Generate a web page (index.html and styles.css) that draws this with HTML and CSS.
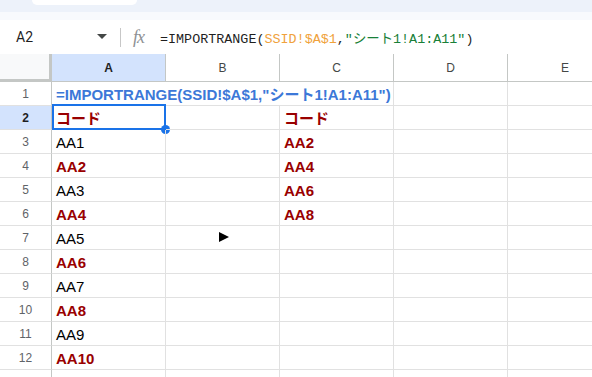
FILE: index.html
```html
<!DOCTYPE html>
<html lang="ja">
<head>
<meta charset="utf-8">
<title>Sheet</title>
<link rel="stylesheet" href="styles.css">
</head>
<body>
<div class="top"><div class="pill"></div></div>
<div class="band"></div>
<div class="fbar">
  <div class="namebox">A2</div>
  <svg class="caret" width="10" height="6" viewBox="0 0 10 6"><path d="M0 0h10L5 5z" fill="#444746"/></svg>
  <div class="sep"></div>
  <div class="fx">fx</div>
  <div class="formula">=IMPORTRANGE(<span class="ref">SSID!$A$1</span>,<span class="str">"シート1!A1:A11"</span>)</div>
</div>
<div class="sheet">
  <div class="corner"></div>
  <div class="ch sel">A</div>
  <div class="ch">B</div>
  <div class="ch">C</div>
  <div class="ch">D</div>
  <div class="ch edge"><span class="lbl">E</span></div>

  <div class="rh">1</div>
  <div class="c span3 blue">=IMPORTRANGE(SSID!$A$1,"シート1!A1:A11")</div>
  <div class="c"></div><div class="c"></div>

  <div class="rh sel">2</div>
  <div class="c red active">コード<span class="frame"></span><span class="handle"></span></div>
  <div class="c"></div><div class="c red">コード</div><div class="c"></div><div class="c"></div>

  <div class="rh">3</div>
  <div class="c">AA1</div><div class="c"></div><div class="c red">AA2</div><div class="c"></div><div class="c"></div>

  <div class="rh">4</div>
  <div class="c red">AA2</div><div class="c"></div><div class="c red">AA4</div><div class="c"></div><div class="c"></div>

  <div class="rh">5</div>
  <div class="c">AA3</div><div class="c"></div><div class="c red">AA6</div><div class="c"></div><div class="c"></div>

  <div class="rh">6</div>
  <div class="c red">AA4</div><div class="c"></div><div class="c red">AA8</div><div class="c"></div><div class="c"></div>

  <div class="rh">7</div>
  <div class="c">AA5</div><div class="c"></div><div class="c"></div><div class="c"></div><div class="c"></div>

  <div class="rh">8</div>
  <div class="c red">AA6</div><div class="c"></div><div class="c"></div><div class="c"></div><div class="c"></div>

  <div class="rh">9</div>
  <div class="c">AA7</div><div class="c"></div><div class="c"></div><div class="c"></div><div class="c"></div>

  <div class="rh">10</div>
  <div class="c red">AA8</div><div class="c"></div><div class="c"></div><div class="c"></div><div class="c"></div>

  <div class="rh">11</div>
  <div class="c">AA9</div><div class="c"></div><div class="c"></div><div class="c"></div><div class="c"></div>

  <div class="rh">12</div>
  <div class="c red">AA10</div><div class="c"></div><div class="c"></div><div class="c"></div><div class="c"></div>

  <div class="rh last"></div>
  <div class="c last"></div><div class="c last"></div><div class="c last"></div><div class="c last"></div><div class="c last"></div>

  <svg class="cursor" width="12" height="12" viewBox="0 0 12 12"><path d="M1 1L11 6L1 11z" fill="#000"/></svg>
</div>
</body>
</html>
```
FILE: styles.css
```css
html, body {
  margin: 0;
  padding: 0;
  background: #fff;
  overflow: hidden;
  width: 592px;
  height: 377px;
}
body {
  font-family: "Liberation Sans", Arial, "Noto Sans CJK JP", sans-serif;
}
.top {
  height: 12px;
  background: #edf2fa;
  display: flex;
}
.pill {
  margin-left: 32px;
  width: 105px;
  height: 5px;
  background: #fff;
  border-radius: 0 0 6px 6px;
}
.band {
  height: 8px;
  background: #f8fafd;
}
.fbar {
  height: 34px;
  display: flex;
  align-items: center;
  background: #fff;
}
.namebox {
  font-family: Roboto, "Liberation Sans", sans-serif;
  font-size: 14px;
  color: #1f1f1f;
  margin-left: 16px;
  width: 80px;
}
.caret {
  margin-left: 1px;
}
.sep {
  width: 1px;
  height: 19px;
  background: #c7c7c7;
  margin-left: 13px;
}
.fx {
  font-family: "Liberation Serif", serif;
  font-style: italic;
  font-size: 18px;
  color: #8e9194;
  margin-left: 12px;
  width: 27px;
  letter-spacing: -1px;
}
.formula {
  font-family: "Liberation Mono", "Noto Sans CJK JP", monospace;
  font-size: 13.4px;
  color: #1f1f1f;
  white-space: nowrap;
}
.ref { color: #f0a23c; }
.str { color: #188038; }

.sheet {
  position: relative;
  display: grid;
  grid-template-columns: 52px repeat(4, 114px) 85px;
  grid-template-rows: 28px repeat(12, 24px) 17px;
  overflow: hidden;
}
.corner {
  background: #f8f9fa;
  border-right: 3px solid #c4c7c5;
  border-bottom: 3px solid #c4c7c5;
  box-sizing: border-box;
}
.ch {
  box-sizing: border-box;
  border-right: 1px solid #c4c7c5;
  border-bottom: 1px solid #c4c7c5;
  display: flex;
  align-items: center;
  justify-content: center;
  font-size: 12px;
  color: #444746;
  background: #fff;
}
.ch.edge {
  justify-content: flex-start;
  border-right: none;
  overflow: hidden;
}
.lbl {
  flex: 0 0 114px;
  text-align: center;
}
.ch.sel, .rh.sel {
  background: #d3e3fd;
  color: #1f1f1f;
  font-weight: bold;
}
.rh {
  box-sizing: border-box;
  border-right: 1px solid #c4c7c5;
  border-bottom: 1px solid #e1e1e1;
  display: flex;
  align-items: center;
  justify-content: center;
  font-size: 12px;
  color: #5f6368;
}
.c {
  position: relative;
  box-sizing: border-box;
  border-right: 1px solid #e1e1e1;
  border-bottom: 1px solid #e1e1e1;
  display: flex;
  align-items: flex-end;
  padding: 0 0 2px 4px;
  line-height: 16px;
  font-size: 15px;
  color: #000;
  white-space: nowrap;
}
.last { border-bottom: none; }
.span3 { grid-column: span 3; }
.red { color: #990000; font-weight: bold; }
.blue { color: #3c78d8; font-weight: bold; }
.frame {
  position: absolute;
  left: 0;
  top: -2px;
  right: -1px;
  bottom: -1px;
  border: 2px solid #1a73e8;
}
.handle {
  position: absolute;
  right: -5px;
  bottom: -5px;
  width: 9px;
  height: 9px;
  border-radius: 50%;
  background: #1a73e8;
}
.cursor {
  position: absolute;
  left: 218px;
  top: 177px;
}
```
